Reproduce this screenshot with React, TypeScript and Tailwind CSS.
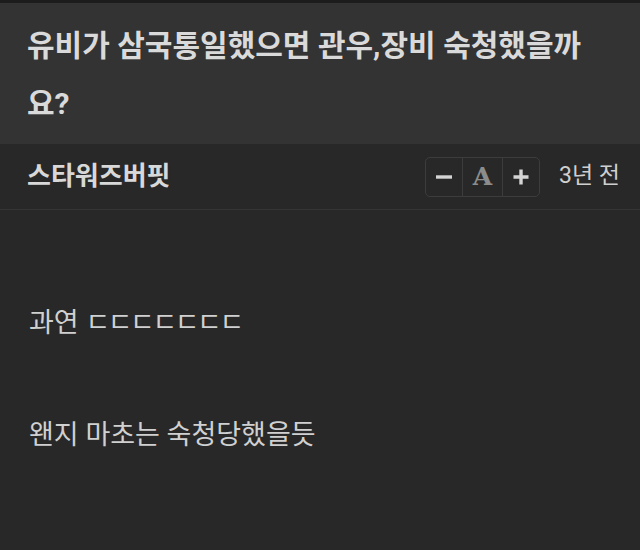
import React from "react";

const font = { fontFamily: 'Roboto, "Noto Sans CJK KR", "Noto Sans", sans-serif' };

export default function App() {
  return (
    <div className="w-[640px] h-[550px] bg-[#282828] overflow-hidden" style={font}>
      <div className="h-[3px] bg-[#1c1c1c]" />
      <div className="bg-[#333333] pl-[27px] pr-[28px] pt-[14px] pb-[11px]">
        <h1 className="text-[30px] leading-[58px] font-bold text-[#dadada]">
          유비가 삼국통일했으면 관우,장비 숙청했을까요?
        </h1>
      </div>
      <div className="h-[66px] flex items-center justify-between pl-[27px] pr-[20px] border-b border-[#353535]">
        <div className="text-[26px] font-bold text-[#d8d8d8]">스타워즈버핏</div>
        <div className="flex items-center gap-[19px]">
          <div className="flex h-[40px] border border-[#3c3c3c] rounded-[5px]">
            <button className="w-[37px] flex items-center justify-center border-r border-[#3c3c3c]">
              <svg width="18" height="18" viewBox="0 0 18 18">
                <path d="M1 9h16" stroke="#d4d4d4" strokeWidth="3.4" />
              </svg>
            </button>
            <button className="w-[40px] flex items-center justify-center border-r border-[#3c3c3c]">
              <span className="text-[25px] font-bold text-[#8c8c8c] leading-none" style={{ fontFamily: '"DejaVu Serif", serif' }}>
                A
              </span>
            </button>
            <button className="w-[36px] flex items-center justify-center">
              <svg width="18" height="18" viewBox="0 0 18 18">
                <path d="M1.5 9h15M9 1.5v15" stroke="#d4d4d4" strokeWidth="3.4" />
              </svg>
            </button>
          </div>
          <span className="text-[23px] text-[#cfcfcf]">3년 전</span>
        </div>
      </div>
      <div className="pl-[29px] pr-[28px] pt-[95px] text-[27px] leading-[36px] text-[#d0d0d0] flex flex-col gap-[76px]">
        <p>
          과연 <span className="tracking-[-2.5px]">ㄷㄷㄷㄷㄷㄷㄷ</span>
        </p>
        <p>왠지 마초는 숙청당했을듯</p>
      </div>
    </div>
  );
}
